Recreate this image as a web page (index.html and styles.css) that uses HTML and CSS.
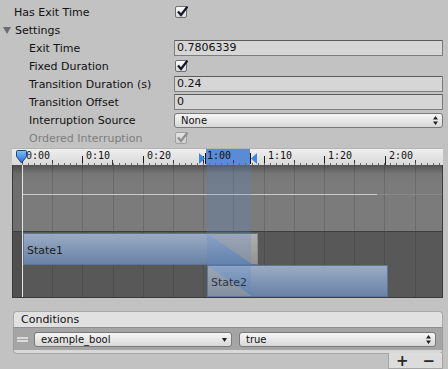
FILE: index.html
```html
<!DOCTYPE html>
<html lang="en">
<head>
  <meta charset="UTF-8" />
  <title>Transition Inspector</title>
  <link rel="stylesheet" href="styles.css">
</head>
<body>

  <!-- Transition settings -->
  <div class="inspector">
    <div class="row">
      <span class="label">Has Exit Time</span>
      <span class="check"><svg viewBox="0 0 12 12"><path d="M2 5.5 L5 9 L11.5 0.5" /></svg></span>
    </div>
    <div class="row foldout"><span class="arrow"></span>Settings</div>
    <div class="row sub">
      <span class="label">Exit Time</span>
      <span class="value field">0.7806339</span>
    </div>
    <div class="row sub">
      <span class="label">Fixed Duration</span>
      <span class="check"><svg viewBox="0 0 12 12"><path d="M2 5.5 L5 9 L11.5 0.5" /></svg></span>
    </div>
    <div class="row sub">
      <span class="label">Transition Duration (s)</span>
      <span class="value field">0.24</span>
    </div>
    <div class="row sub">
      <span class="label">Transition Offset</span>
      <span class="value field">0</span>
    </div>
    <div class="row sub">
      <span class="label">Interruption Source</span>
      <span class="value popup">None
        <svg class="updown" viewBox="0 0 5 9"><path d="M2.5 0 L5 3.5 H0 Z M2.5 9 L5 5.5 H0 Z" /></svg>
      </span>
    </div>
    <div class="row sub disabled">
      <span class="label">Ordered Interruption</span>
      <span class="check"><svg viewBox="0 0 12 12"><path d="M2 5.5 L5 9 L11.5 0.5" /></svg></span>
    </div>
  </div>

  <!-- Timeline -->
  <div class="timeline">
    <div class="ruler">
      <div class="sel"></div>
      <svg class="ticks" viewBox="0 0 431 17">
        <path d="M10.5 8V17 M70.5 8V17 M131.5 8V17 M191.5 8V17 M252.5 8V17 M312.5 8V17 M373.5 8V17" />
        <path class="mid" d="M40.5 12V17 M100.5 12V17 M161.5 12V17 M221.5 12V17 M282.5 12V17 M342.5 12V17 M403.5 12V17" />
      </svg>
      <span class="tick" style="left: 14px">0:00</span>
      <span class="tick" style="left: 74px">0:10</span>
      <span class="tick" style="left: 135px">0:20</span>
      <span class="tick" style="left: 195px">1:00</span>
      <span class="tick" style="left: 256px">1:10</span>
      <span class="tick" style="left: 316px">1:20</span>
      <span class="tick" style="left: 377px">2:00</span>
      <svg class="marker start" viewBox="0 0 7 11"><path d="M0 0 L6 5.5 L0 11 Z" /><rect x="6" y="0" width="1" height="11" /></svg>
      <svg class="marker end" viewBox="0 0 7 11"><path d="M7 0 L1 5.5 L7 11 Z" /><rect x="0" y="0" width="1" height="11" /></svg>
    </div>
    <div class="tracks">
      <div class="upper"><div class="grid"></div><div class="strip"></div></div>
      <div class="lower"><div class="grid"></div><div class="strip"></div></div>
      <div class="curve"></div>
      <div class="state state1"><div class="blue"></div><span>State1</span></div>
      <div class="state state2"><div class="blue"></div><span>State2</span></div>
      <div class="overlap"></div>
      <div class="playline"></div>
    </div>
    <svg class="playhead" viewBox="0 0 13 14">
      <defs>
        <linearGradient id="ph" x1="0" y1="0" x2="0" y2="1">
          <stop offset="0" stop-color="#7cc0ff" />
          <stop offset="1" stop-color="#1c6ad8" />
        </linearGradient>
      </defs>
      <path d="M1.5 1.5 Q1.5 0.5 2.5 0.5 H10.5 Q11.5 0.5 11.5 1.5 V6.5 L6.5 13 L1.5 6.5 Z" fill="url(#ph)" stroke="#24436e" />
    </svg>
  </div>

  <!-- Conditions list -->
  <div class="conditions">
    <div class="cond-head">Conditions</div>
    <div class="cond-row">
      <span class="handle"></span>
      <span class="popup param">example_bool
        <svg class="down" viewBox="0 0 5 4"><path d="M0 0 H5 L2.5 4 Z" /></svg>
      </span>
      <span class="popup mode">true
        <svg class="updown" viewBox="0 0 5 9"><path d="M2.5 0 L5 3.5 H0 Z M2.5 9 L5 5.5 H0 Z" /></svg>
      </span>
    </div>
    <div class="cond-foot"></div>
    <div class="cond-buttons"><span>+</span><span>−</span></div>
  </div>

</body>
</html>
```

FILE: styles.css
```css
body {
  margin: 0;
  width: 448px;
  height: 369px;
  overflow: hidden;
  background: #c2c2c2;
  font-family: "DejaVu Sans", sans-serif;
  font-size: 11px;
  color: #111;
}

/* Inspector rows */
.inspector {
  padding: 3px 5px 0 0;
}
.row {
  display: flex;
  align-items: center;
  height: 18px;
  white-space: nowrap;
}
.label {
  width: 174px;
  padding-left: 14px;
  box-sizing: border-box;
}
.row.sub .label {
  padding-left: 29px;
}
.row.disabled .label {
  color: #7e7e7e;
}
.foldout {
  padding-left: 3px;
}
.foldout .arrow {
  width: 0;
  height: 0;
  border-left: 4px solid transparent;
  border-right: 4px solid transparent;
  border-top: 7px solid #6d6d6d;
  margin-right: 4px;
}
.value {
  flex: 1;
  min-width: 0;
}
.field {
  height: 16px;
  line-height: 14px;
  box-sizing: border-box;
  padding-left: 2px;
  background: #d6d6d6;
  border: 1px solid #7d7d7d;
  border-top-color: #5c5c5c;
  border-radius: 1px;
}
.check {
  position: relative;
  width: 12px;
  height: 12px;
  margin-left: 1px;
  box-sizing: border-box;
  border: 1px solid #6f6f6f;
  border-radius: 2px;
  background: linear-gradient(#fbfbfb, #d9d9d9);
}
.check svg {
  position: absolute;
  left: 0;
  top: -1px;
  width: 12px;
  height: 12px;
  fill: none;
  stroke: #101828;
  stroke-width: 2.2;
}
.disabled .check {
  border-color: #a2a2a2;
  background: linear-gradient(#e4e4e4, #cfcfcf);
}
.disabled .check svg {
  stroke: #8e8e8e;
}
.popup {
  position: relative;
  height: 15px;
  line-height: 13px;
  box-sizing: border-box;
  padding-left: 6px;
  font-size: 10px;
  background: linear-gradient(#f6f6f6, #d8d8d8);
  border: 1px solid #7a7a7a;
  border-radius: 3px;
}
.popup .updown {
  position: absolute;
  right: 4px;
  top: 2px;
  width: 5px;
  height: 9px;
  fill: #222;
}
.popup .down {
  position: absolute;
  right: 4px;
  top: 5px;
  width: 5px;
  height: 4px;
  fill: #222;
}

/* Timeline */
.timeline {
  position: relative;
  margin: 1px 5px 0 12px;
}
.ruler {
  position: relative;
  height: 17px;
  background: linear-gradient(#eeeeee, #d9d9d9);
  border-top: 1px solid #b4b4b4;
  box-sizing: border-box;
  overflow: hidden;
}
.ruler::after {
  content: "";
  position: absolute;
  left: 10px;
  right: 0;
  bottom: 0;
  height: 2px;
  background: repeating-linear-gradient(90deg, #6a6a6a 0 1px, transparent 1px 6.04px);
}
.ruler .sel {
  position: absolute;
  left: 194px;
  width: 44px;
  top: 0;
  bottom: 0;
  background: #5b8bd4;
}
.ticks {
  position: absolute;
  left: 0;
  top: -1px;
  width: 431px;
  height: 17px;
  stroke: #1e1e1e;
  stroke-width: 1;
}
.ticks .mid {
  stroke: #3a3a3a;
}
.tick {
  position: absolute;
  top: 1px;
  font-family: "DejaVu Sans Mono", monospace;
  font-size: 10px;
  line-height: 12px;
  color: #111;
}
.marker {
  position: absolute;
  top: 4px;
  width: 7px;
  height: 11px;
  fill: #3c86e0;
}
.marker rect {
  fill: #111;
}
.marker.start {
  left: 187px;
}
.marker.end {
  left: 238px;
}

.tracks {
  position: relative;
  height: 132px;
  border: 1px solid #3a3a3a;
  border-top: 0;
  overflow: hidden;
}
.upper {
  position: relative;
  height: 66px;
  background: linear-gradient(#545454, #777777 9px, #7b7b7b 20px);
  border-bottom: 1px solid #3e3e3e;
}
.lower {
  position: relative;
  height: 65px;
  background: #585858;
}
.grid {
  position: absolute;
  top: 0;
  bottom: 0;
  left: 10px;
  right: 0;
  background: repeating-linear-gradient(90deg, transparent 0 29.2px, rgba(0, 0, 0, 0.13) 29.2px 30.2px);
}
.strip {
  position: absolute;
  left: 0;
  top: 0;
  bottom: 0;
  width: 9px;
  background: rgba(0, 0, 0, 0.1);
}
.curve {
  position: absolute;
  left: 9px;
  width: 355px;
  top: 29px;
  height: 1px;
  background: #cbcbcb;
}
.curve::after {
  content: "";
  position: absolute;
  left: 355px;
  width: 70px;
  top: 0;
  height: 1px;
  background: #888;
}
.state {
  position: absolute;
  box-sizing: border-box;
  height: 32px;
  border: 1px solid #5f7494;
  background: linear-gradient(#b0b0b0, #929292);
}
.state .blue {
  position: absolute;
  inset: 0;
  background: linear-gradient(#9babc4, #6882a6);
}
.state span {
  position: relative;
  display: block;
  padding: 10px 0 0 3px;
  color: #1c1c1c;
}
.state1 {
  left: 10px;
  width: 235px;
  top: 68px;
  border-right-color: #8a8a8a;
}
.state1 .blue {
  clip-path: polygon(0 0, 184px 0, 228px 100%, 0 100%);
}
.state2 {
  left: 194px;
  width: 181px;
  top: 100px;
}
.state2 .blue {
  clip-path: polygon(0 0, 100% 0, 100% 100%, 44px 100%);
}
.overlap {
  position: absolute;
  left: 194px;
  width: 44px;
  top: 0;
  bottom: 0;
  background: rgba(80, 130, 205, 0.22);
}
.playline {
  position: absolute;
  left: 9px;
  top: 0;
  bottom: 0;
  width: 1px;
  background: #e4e4e4;
}
.playhead {
  position: absolute;
  left: 3px;
  top: 2px;
  width: 13px;
  height: 14px;
}

/* Conditions */
.conditions {
  margin: 13px 5px 0 13px;
}
.cond-head {
  height: 17px;
  line-height: 16px;
  box-sizing: border-box;
  padding-left: 7px;
  background: #e1e1e1;
  border: 1px solid #a9a9a9;
  border-bottom-color: #8e8e8e;
  border-radius: 4px 4px 0 0;
}
.cond-row {
  display: flex;
  align-items: center;
  gap: 6px;
  height: 22px;
  padding: 0 6px 0 3px;
  background: #a5a5a5;
  border-left: 1px solid #9a9a9a;
  border-right: 1px solid #9a9a9a;
}
.handle {
  width: 11px;
  height: 5px;
  border-top: 2px solid #dadada;
  border-bottom: 2px solid #dadada;
  box-sizing: border-box;
  margin-top: 1px;
}
.cond-row .popup {
  font-size: 10px;
  color: #111;
}
.cond-row .param {
  width: 198px;
}
.cond-row .mode {
  flex: 1;
  margin-left: 1px;
}
.cond-foot {
  height: 3px;
  background: #d9d9d9;
  border: 1px solid #a5a5a5;
  border-top: 0;
  border-radius: 0 0 4px 4px;
}
.cond-buttons {
  display: flex;
  justify-content: space-around;
  align-items: center;
  width: 55px;
  height: 16px;
  margin-left: auto;
  margin-top: -1px;
  background: #dcdcdc;
  border: 1px solid #a5a5a5;
  border-top: 0;
  box-sizing: border-box;
  font-size: 15px;
  font-weight: bold;
  color: #2a2a2a;
}
```
